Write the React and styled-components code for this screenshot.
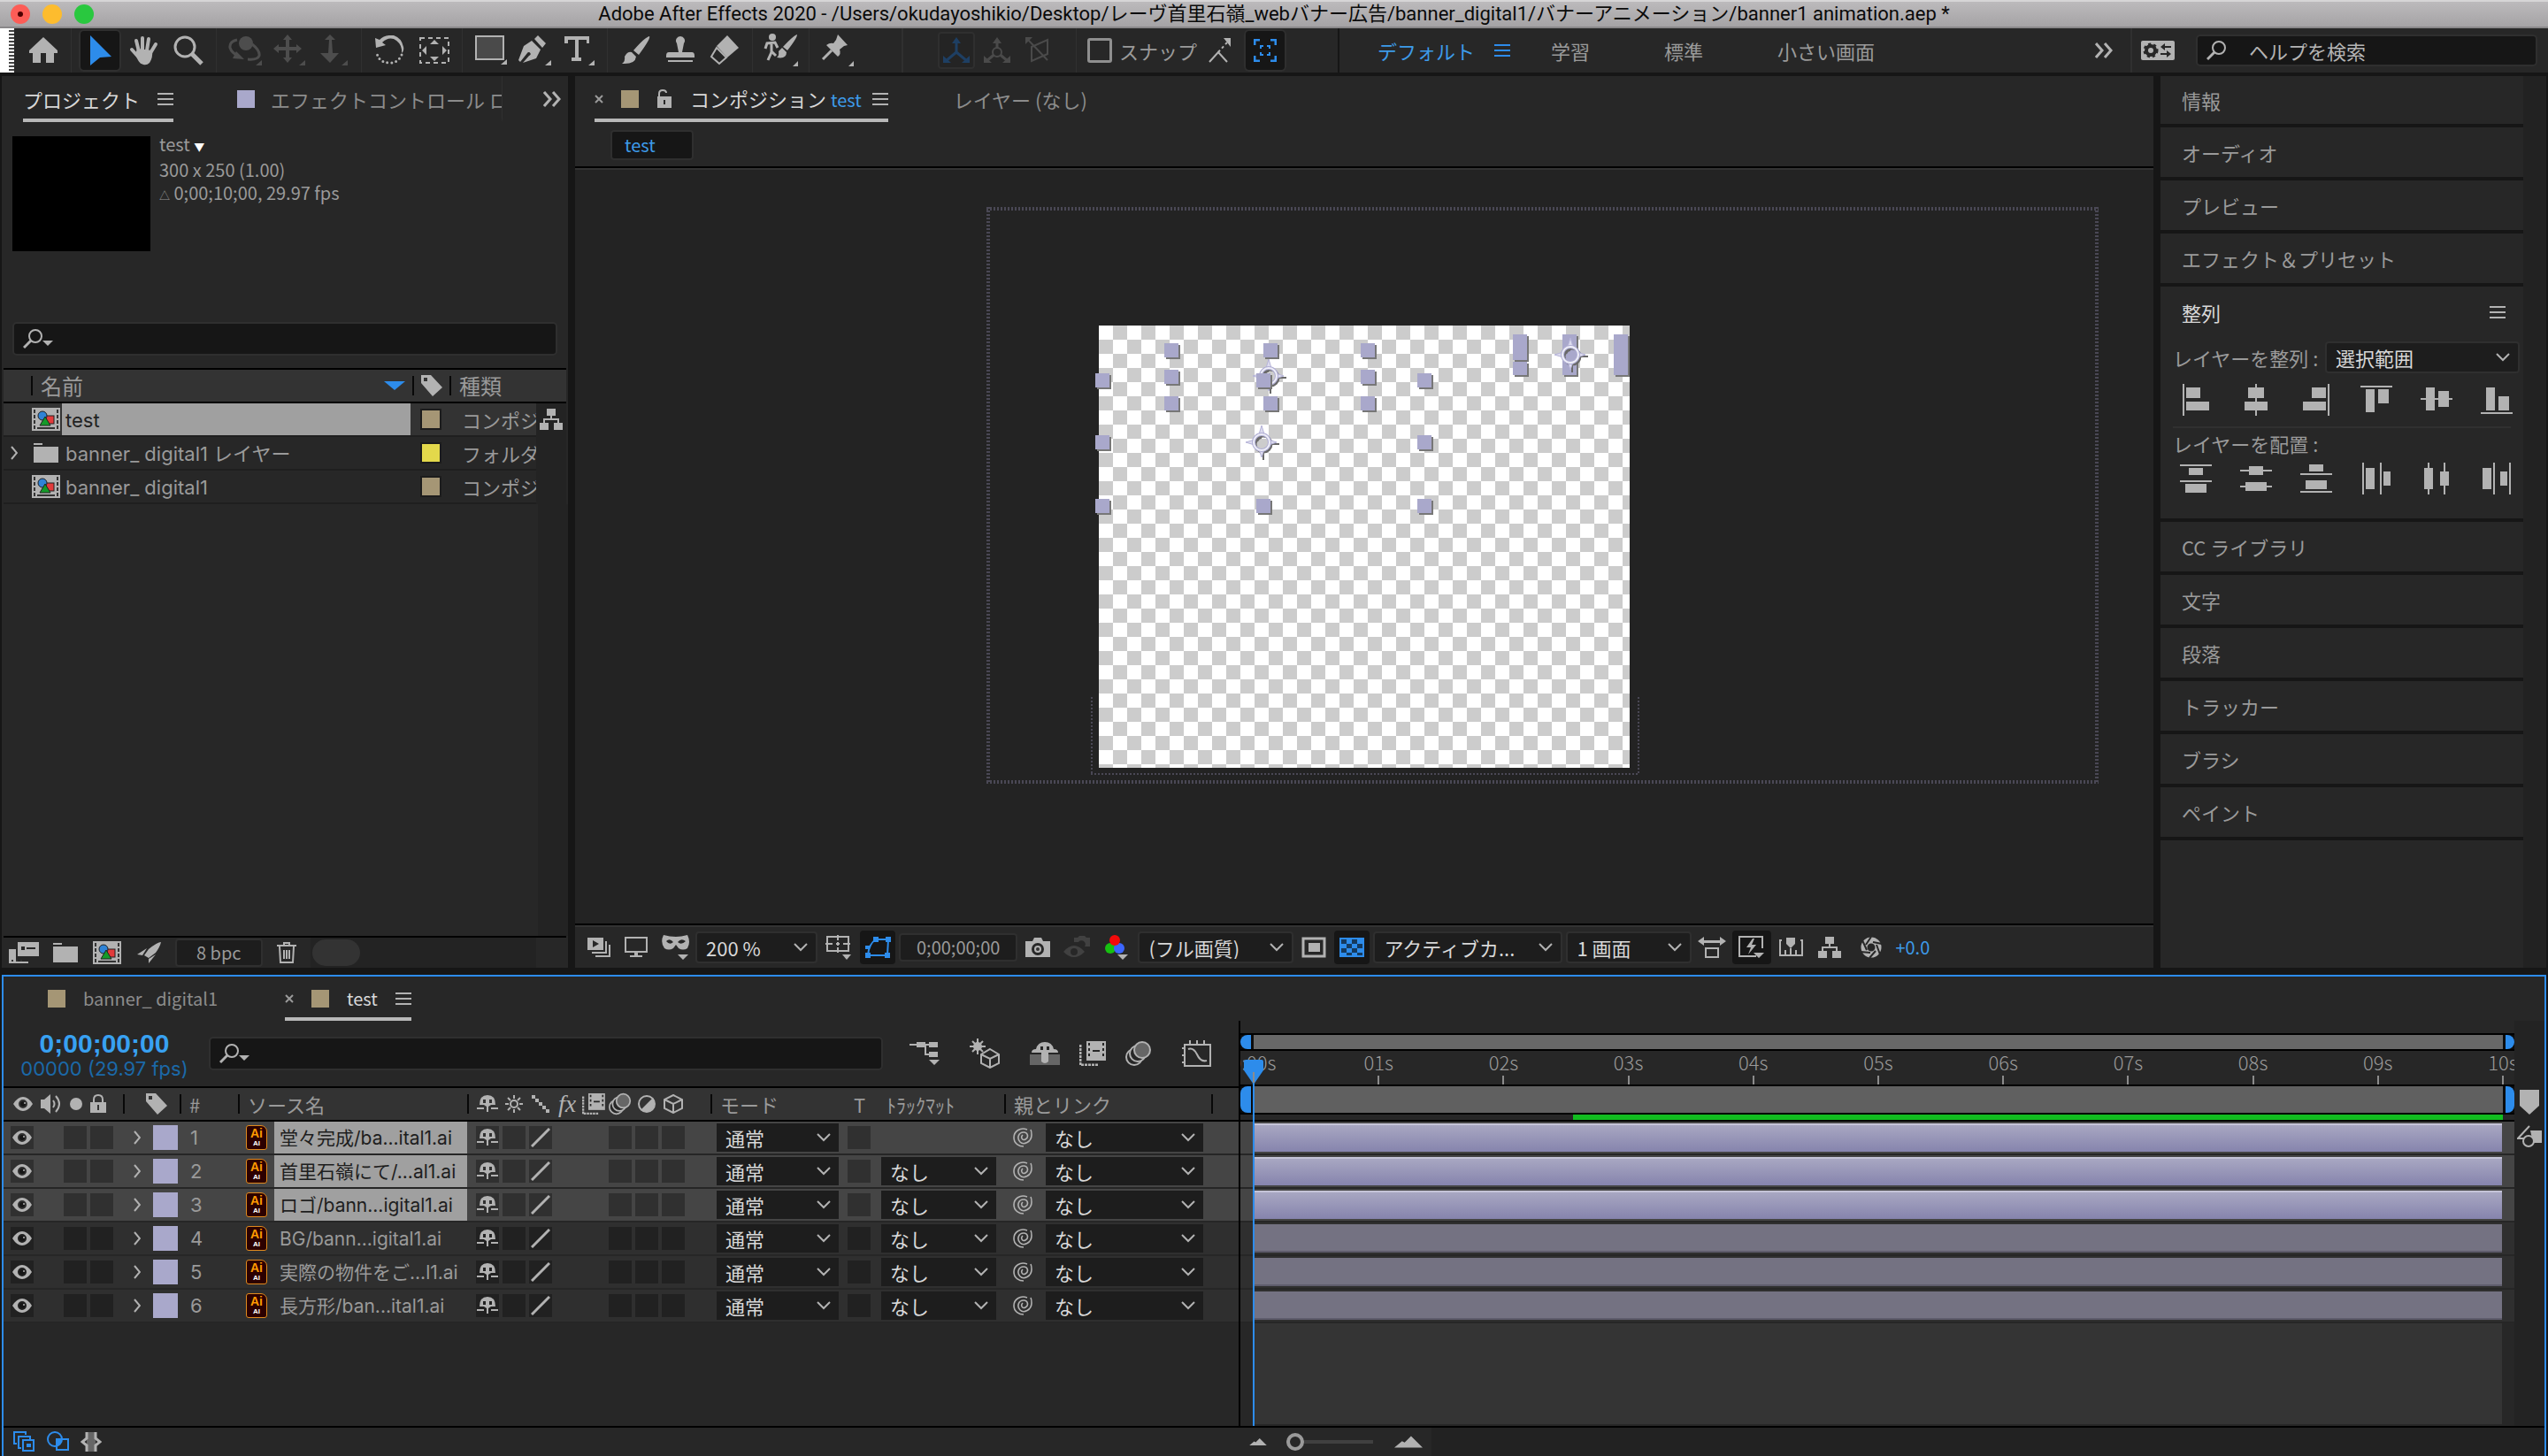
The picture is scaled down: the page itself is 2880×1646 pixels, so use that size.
import React, { Component } from 'react'
import styled, { createGlobalStyle, css } from 'styled-components'

const colorPanel = '#272727'
const colorDark = '#161616'
const colorField = '#1d1d1d'
const colorText = '#9a9a9a'
const colorBright = '#d8d8d8'
const colorIcon = '#b2b2b2'
const colorBlue = '#2d8ceb'
const colorLavender = '#a9a8cb'
const colorSand = '#a59675'

const fontUi = '"Noto Sans CJK JP", sans-serif'
const fontSystem = 'Inter, "Noto Sans CJK JP", sans-serif'
const fontTitle = 'Roboto, "Noto Sans CJK JP", sans-serif'
const fontTimecode = '"Liberation Sans", sans-serif'

const GlobalStyle = createGlobalStyle`
  * { box-sizing: border-box; }
  body {
    margin: 0;
    background: ${colorDark};
    color: ${colorText};
    font-family: ${fontUi};
    font-size: 22px;
    line-height: 26px;
  }
  button, select, input {
    font: inherit;
    color: inherit;
    margin: 0;
    padding: 0;
    border: 0;
    background: none;
    border-radius: 0;
    outline: 0;
  }
  svg { display: block; flex: none; }
`

/* ---------- icons ---------- */

const Icon = ({ w, h, color, children }) => (
  <svg
    width={w}
    height={h}
    viewBox={`0 0 ${w} ${h}`}
    fill={color || colorIcon}
    stroke='none'
    aria-hidden='true'
  >
    {children}
  </svg>
)

const Line = ({ d, s = 2, c = colorIcon, ...rest }) => (
  <path d={d} fill='none' stroke={c} strokeWidth={s} {...rest} />
)

const HomeIcon = () => (
  <Icon w={32} h={30}>
    <path d='M16 0L32 15V18H28V29H19V18H13V29H4V18H0V15Z' />
  </Icon>
)
const ArrowIcon = () => (
  <Icon w={26} h={36} color={colorBlue}>
    <path d='M2 1L26 25L13 26L2 35Z' />
  </Icon>
)
const HandIcon = () => (
  <Icon w={34} h={34}>
    <Line
      s={4}
      strokeLinecap='round'
      d='M11 18L8 6M15 17V3M20 17L22 4M24 20L30 10M11 25L3 16'
    />
    <path d='M9 15L26 17Q27 25 23 31Q20 34 16 33Q12 32 10 28L7 22Z' />
  </Icon>
)
const ZoomIcon = () => (
  <Icon w={34} h={34}>
    <circle cx='13' cy='13' r='11' fill='none' stroke={colorIcon} strokeWidth='3' />
    <Line d='M21 21L32 32' s={5} />
  </Icon>
)
const OrbitIcon = () => (
  <Icon w={38} h={36} color='#4d4d4d'>
    <circle cx='20' cy='10' r='8' />
    <Line c='#4d4d4d' s={3} d='M10 6Q1 8 2 15Q4 21 11 24M27 11Q36 18 35 24Q33 29 22 28' />
    <path d='M9 19L18 28L5 27ZM38 29V35H31Z' />
  </Icon>
)
const PanIcon = () => (
  <Icon w={38} h={36} color='#4d4d4d'>
    <Line c='#4d4d4d' s={4} d='M17 4V28M5 16H29' />
    <path d='M17 0L22 6H12ZM17 32L22 26H12ZM1 16L7 11V21ZM33 16L27 11V21ZM37 29V35H30Z' />
  </Icon>
)
const DollyIcon = () => (
  <Icon w={32} h={36} color='#4d4d4d'>
    <path d='M12 0L18 6H14L15 21H22L12 32L1 21H10L11 6H6ZM32 29V35H25Z' />
  </Icon>
)
const RotateIcon = () => (
  <Icon w={34} h={34}>
    <path d='M0 3L1 14L12 11L8 8Q14 2 21 4Q29 8 30 16V20Q33 18 32 13Q30 3 21 0Q11 -1 5 5Z' />
    <Line s={3} strokeLinecap='round' strokeDasharray='0 5' d='M30 22Q26 31 17 31Q4 31 2 20' />
  </Icon>
)
const AnchorToolIcon = () => (
  <Icon w={34} h={30}>
    <Line strokeDasharray='5 4' d='M1 1H33V29H1Z' />
    <path d='M17 3L22 8H12ZM17 27L22 22H12ZM3 15L8 10V20ZM31 15L26 10V20Z' />
  </Icon>
)
const RectIcon = () => (
  <Icon w={38} h={36}>
    <rect x='2' y='2' width='31' height='26' fill='#4a4a4a' stroke={colorIcon} strokeWidth='2' />
    <path d='M37 28V34H30Z' />
  </Icon>
)
const PenIcon = () => (
  <Icon w={38} h={36}>
    <path d='M22 1L31 10L27 15L18 5ZM15 7L25 17L20 27L5 32L12 24A2 2 0 1 0 10 21L2 31L0 29L6 13ZM37 29V35H30Z' />
  </Icon>
)
const TypeIcon = () => (
  <Icon w={36} h={36}>
    <path d='M1 2H29V10H26V6H17V26H20V30H9V26H13V6H5V10H1ZM35 29V35H28Z' />
  </Icon>
)
const BrushIcon = () => (
  <Icon w={34} h={34}>
    <path d='M32 1Q34 3 20 22L14 17Q27 2 32 1ZM12 19L17 24Q16 33 1 32Q5 29 4 24Q7 18 12 19Z' />
  </Icon>
)
const StampIcon = () => (
  <Icon w={34} h={32}>
    <path d='M17 0A5 5 0 0 1 21 8L19 18H30Q33 18 33 22V24H1V22Q1 18 4 18H15L13 8A5 5 0 0 1 17 0ZM3 27H31V29H3Z' />
  </Icon>
)
const EraserIcon = () => (
  <Icon w={34} h={34}>
    <path d='M20 0L33 14L20 25L8 12Z' />
    <Line d='M8 14L2 24L11 32L19 25Z' />
  </Icon>
)
const RotoIcon = () => (
  <Icon w={40} h={38}>
    <circle cx='10' cy='4' r='4' />
    <Line s={3} d='M2 17L4 11L13 10L16 16M9 11V21L5 30M9 20L14 25' />
    <path d='M38 1Q38 5 27 19L22 15Q34 2 38 1ZM21 16L26 21Q26 29 15 27Q18 25 17 20ZM39 31V37H33Z' />
  </Icon>
)
const PinIcon = () => (
  <Icon w={38} h={38}>
    <path d='M19 1L30 13L26 14L21 18Q23 23 19 26L6 13Q10 10 14 11L17 7Z' />
    <Line d='M12 19L2 29' s={3} />
    <path d='M37 31V37H31Z' />
  </Icon>
)
const AxisIcon = ({ color, hub }) => (
  <Icon w={30} h={30} color={color}>
    <Line c={color} s={3} d='M15 4V17M15 17L3 27M15 17L27 27' />
    <path d='M15 0L20 7H10ZM0 21V29H9ZM30 21V29H21Z' />
    {hub && <circle cx='15' cy='17' r='5' fill={colorPanel} stroke={color} strokeWidth='2' />}
  </Icon>
)
const ViewAxisIcon = () => (
  <Icon w={28} h={30} color='#4a4a4a'>
    <Line c='#4a4a4a' d='M3 3L25 26M7 11L25 3V19L7 27Z' />
    <path d='M0 0H8L0 8Z' />
  </Icon>
)
const SnapEdgeIcon = () => (
  <Icon w={28} h={28}>
    <path d='M18 0H26V10Z' />
    <Line d='M2 27L12 16L22 27' />
    <Line d='M12 16L22 5' strokeDasharray='3 3' />
  </Icon>
)
const SnapBoxIcon = () => (
  <Icon w={26} h={26}>
    <Line c={colorBlue} s={3} d='M1 7V1H7M19 1H25V7M25 19V25H19M7 25H1V19' />
    <Line c={colorBlue} d='M8 11V8H11M15 8H18V11M18 15V18H15M11 18H8V15' />
  </Icon>
)
const MenuIcon = ({ color }) => (
  <Icon w={18} h={16} color={color}>
    <path d='M0 1H18V3H0ZM0 7H18V9H0ZM0 13H18V15H0Z' />
  </Icon>
)
const MoreIcon = () => (
  <Icon w={20} h={18}>
    <Line s={3} d='M1 1L8 9L1 17M11 1L18 9L11 17' />
  </Icon>
)
const GearIcon = () => (
  <Icon w={38} h={22}>
    <rect width='38' height='22' rx='2' />
    <circle cx='11' cy='11' r='5' fill='none' stroke={colorPanel} strokeWidth='4' />
    <circle cx='11' cy='11' r='7' fill='none' stroke={colorPanel} strokeWidth='3' strokeDasharray='3 3' />
    <path fill={colorPanel} d='M22 7L27 3V6H34V8H27V11ZM34 15L29 11V14H22V16H29V19Z' />
  </Icon>
)
const SearchIcon = ({ caret }) => (
  <Icon w={34} h={24}>
    <circle cx='14' cy='9' r='7' fill='none' stroke={colorIcon} strokeWidth='2' />
    <Line d='M9 14L1 22' s={3} />
    {caret && <path d='M22 14H34L28 20Z' />}
  </Icon>
)
const ChevronDown = () => (
  <Icon w={16} h={10}>
    <Line d='M1 1L8 8L15 1' />
  </Icon>
)
const ChevronRight = () => (
  <Icon w={8} h={16}>
    <Line d='M1 1L7 8L1 15' />
  </Icon>
)
const CloseIcon = () => (
  <Icon w={10} h={10}>
    <Line c={colorText} d='M1 1L9 9M9 1L1 9' />
  </Icon>
)
const UnlockIcon = () => (
  <Icon w={18} h={22}>
    <Line d='M3 9V5Q3 1 7 1Q11 1 11 4' />
    <path d='M1 8H17V21H1ZM8 12V17H10V12Z' fillRule='evenodd' />
  </Icon>
)
const LockIcon = () => (
  <Icon w={18} h={22}>
    <Line d='M4 10V6Q4 1 9 1Q14 1 14 6V10' />
    <path d='M0 9H18V21H0ZM8 12V18H10V12Z' fillRule='evenodd' />
  </Icon>
)
const CompIcon = ({ size = 32 }) => (
  <svg width={size} height={26} viewBox='0 0 32 26' aria-hidden='true'>
    <rect width='32' height='26' fill={colorIcon} />
    <path d='M3 2V26M29 2V26' stroke='#333' strokeWidth='2' strokeDasharray='4 2' />
    <path d='M6 23H26' stroke='#333' strokeWidth='2' />
    <rect x='15' y='9' width='10' height='9' fill='#e23b3b' stroke='#222' />
    <circle cx='12' cy='9' r='5' fill='#2f83d6' stroke='#222' />
    <path d='M15 10L21 20H9Z' fill='#149a29' stroke='#222' />
  </svg>
)
const FolderIcon = () => (
  <Icon w={28} h={22}>
    <path d='M0 0H10V2H0ZM0 4H28V22H0Z' />
  </Icon>
)
const TagIcon = () => (
  <Icon w={24} h={24}>
    <path fillRule='evenodd' d='M0 0H11L24 14L13 24L0 9ZM3 3V7H7V3Z' />
  </Icon>
)
const FlowIcon = () => (
  <Icon w={26} h={24}>
    <path d='M8 0H18V8H8ZM0 16H10V24H0ZM16 16H26V24H16Z' />
    <Line d='M13 8V12M5 16V12H21V16' />
  </Icon>
)
const InterpretIcon = () => (
  <Icon w={34} h={24}>
    <path d='M0 8H8V22H22V24H0ZM10 0H34V16H10ZM14 5V9H18V5ZM20 6H30V8H20Z' fillRule='evenodd' />
    <path fill='#333' d='M3 20H5V22H3ZM8 20H10V22H8ZM13 20H15V22H13Z' />
  </Icon>
)
const RocketIcon = () => (
  <Icon w={28} h={24}>
    <path d='M28 0Q24 0 14 8L9 15L14 18L22 12Q27 5 28 0ZM12 7L1 14L7 15ZM22 14L14 24V19Z' />
  </Icon>
)
const TrashIcon = () => (
  <Icon w={22} h={24}>
    <Line d='M8 3V1H14V3M0 4H22M3 5L4 23H18L19 5M8 9V19M11 9V19M14 9V19' />
  </Icon>
)
const StackPlayIcon = () => (
  <Icon w={26} h={22}>
    <path fillRule='evenodd' d='M0 0H18V14H0ZM6 3V11L13 7Z' />
    <Line d='M21 4V17H5M25 8V21H9' />
  </Icon>
)
const MonitorIcon = () => (
  <Icon w={26} h={24}>
    <Line d='M1 1H25V17H1Z' />
    <path d='M11 18H15V21H20V23H6V21H11Z' />
  </Icon>
)
const MaskIcon = () => (
  <Icon w={32} h={28}>
    <path
      fillRule='evenodd'
      d='M2 0Q9 2 16 2Q22 2 29 0Q33 8 29 15Q24 18 19 15L16 11L13 15Q8 18 3 15Q-2 8 2 0ZM5 7Q9 3 13 8Q9 12 5 7ZM18 8Q22 3 27 7Q22 12 18 8ZM18 22H30L24 28Z'
    />
  </Icon>
)
const TargetIcon = () => (
  <Icon w={30} h={28}>
    <Line d='M2 2H26V18H2Z' />
    <Line d='M14 0V6M14 14V20M0 10H8M20 10H28M14 8V12M12 10H16' />
    <path d='M19 22H29L24 28Z' />
  </Icon>
)
const MaskPathIcon = () => (
  <Icon w={30} h={24} color={colorBlue}>
    <Line c={colorBlue} d='M4 21H26L27 3H13Q5 8 4 21' />
    <path d='M1 18H7V24H1ZM23 18H29V24H23ZM24 0H30V6H24ZM10 0H16V6H10ZM1 10H6V14H1Z' />
  </Icon>
)
const CameraIcon = () => (
  <Icon w={28} h={22}>
    <path fillRule='evenodd' d='M0 4H8L10 0H18L20 4H28V22H0ZM14 6A7 7 0 1 0 14 20A7 7 0 1 0 14 6Z' />
    <circle cx='14' cy='13' r='4' />
    <circle cx='14' cy='13' r='2' fill='#333' />
  </Icon>
)
const GhostCameraIcon = () => (
  <Icon w={30} h={26} color='#414141'>
    <path fillRule='evenodd' d='M12 2H16L18 0H24L26 2H30V12H24A4 4 0 1 0 17 7H12ZM0 18Q12 4 24 18Q12 30 0 18ZM12 14A4 4 0 1 0 12 22A4 4 0 1 0 12 14Z' />
  </Icon>
)
const RgbIcon = () => (
  <Icon w={26} h={28}>
    <circle cx='6' cy='15' r='6' fill='#17c011' />
    <circle cx='16' cy='15' r='6' fill='#3c66ff' />
    <circle cx='11' cy='6' r='6' fill='#f30a0a' />
    <path d='M14 22H26L20 28Z' />
  </Icon>
)
const RoiIcon = () => (
  <Icon w={28} h={24}>
    <Line s={3} d='M2 2H26V22H2Z' />
    <rect x='8' y='7' width='13' height='10' />
  </Icon>
)
const GridIcon = () => (
  <Icon w={28} h={22}>
    <rect x='1' y='1' width='26' height='20' fill='#153a5e' stroke={colorBlue} strokeWidth='2' />
    <path fill={colorBlue} d='M8 2H14V7H8ZM20 2H26V7H20ZM2 7H8V12H2ZM14 7H20V12H14ZM8 12H14V17H8ZM20 12H26V17H20ZM2 17H8V20H2ZM14 17H20V20H14Z' />
  </Icon>
)
const AspectIcon = () => (
  <Icon w={32} h={24}>
    <path d='M0 5L7 0V4H25V0L32 5L25 10V7H7V10Z' />
    <Line d='M9 13H23V23H9Z' />
  </Icon>
)
const FastIcon = () => (
  <Icon w={30} h={26}>
    <Line d='M20 23H1V1H27V14' />
    <path d='M16 3L9 13H14L11 21L20 10H15L18 3ZM17 19H29L23 25Z' />
  </Icon>
)
const TimelineIcon = () => (
  <Icon w={28} h={22}>
    <Line d='M3 3H1V20H26V3H24M7 14V19M13 12V19M19 14V19' />
    <path d='M8 0H18V7L13 12L8 7Z' />
  </Icon>
)
const ShutterIcon = () => (
  <Icon w={26} h={24}>
    <circle cx='13' cy='12' r='8' fill='none' stroke={colorIcon} strokeWidth='7' />
    <Line c={colorPanel} d='M13 0L7 9M25 8L15 6M23 20L19 9M11 24L18 16M1 17L12 18M3 4L8 15' />
  </Icon>
)
const MiniFlowIcon = () => (
  <Icon w={34} h={28}>
    <path d='M8 1H18V7H8ZM22 1H32V7H22ZM22 12H32V18H22ZM22 21H34L28 27Z' />
    <Line d='M0 4H24M18 4V15H23' />
  </Icon>
)
const DraftIcon = () => (
  <Icon w={34} h={34}>
    <Line d='M9 0V18M0 9H18M3 3L15 15M15 3L3 15' />
    <circle cx='9' cy='9' r='5' />
    <Line d='M23 12L33 18V28L23 33L13 28V18ZM13 18L23 23L33 18M23 23V33' />
  </Icon>
)
const ShyHideIcon = () => (
  <Icon w={34} h={26}>
    <rect y='14' width='34' height='12' fill='#666' />
    <path fillRule='evenodd' d='M2 12Q2 8 7 8Q9 0 17 0Q25 0 27 8Q32 8 32 12H21V22Q17 26 13 22V12ZM12 5V9H15V5ZM19 5V9H22V5Z' />
  </Icon>
)
const FilmIcon = ({ w = 30, h = 28 }) => (
  <svg width={w} height={h} viewBox='0 0 30 28' fill={colorIcon} aria-hidden='true'>
    <path d='M8 0H30V22H8Z' />
    <path fill={colorPanel} d='M10 2H12V5H10ZM10 8H12V11H10ZM10 14H12V17H10ZM26 2H28V5H26ZM26 8H28V11H26ZM26 14H28V17H26ZM15 10H23V12H15Z' />
    <path d='M1 4V27H22' fill='none' stroke={colorIcon} strokeWidth='3' strokeDasharray='3 1' />
  </svg>
)
const BlurIcon = ({ w = 30, h = 28 }) => (
  <svg width={w} height={h} viewBox='0 0 30 28' aria-hidden='true'>
    <g fill={colorPanel} stroke={colorIcon} strokeWidth='2'>
      <circle cx='10' cy='18' r='9' />
      <circle cx='14' cy='14' r='9' />
      <circle cx='19' cy='10' r='9' fill='#666' />
    </g>
  </svg>
)
const GraphIcon = () => (
  <Icon w={34} h={30}>
    <Line d='M3 5H32V29H3ZM9 0V5M17 0V5M25 0V5M0 9H3M0 17H3M0 25H3' />
    <Line d='M7 10Q13 8 17 16Q21 25 28 23' />
  </Icon>
)
const EyeIcon = () => (
  <Icon w={22} h={16}>
    <path fillRule='evenodd' d='M0 8Q5 0 11 0Q17 0 22 8Q17 16 11 16Q5 16 0 8ZM11 3A5 5 0 1 0 11 13A5 5 0 1 0 11 3Z' />
    <circle cx='11' cy='8' r='3' fill='#161616' />
    <circle cx='13' cy='7' r='1' />
  </Icon>
)
const SpeakerIcon = () => (
  <Icon w={24} h={22}>
    <path d='M0 6H4L11 0V22L4 16H0Z' />
    <Line d='M14 7Q17 11 14 15M17 2Q25 11 17 20' />
  </Icon>
)
const DotIcon = () => (
  <Icon w={14} h={14}>
    <circle cx='7' cy='7' r='7' />
  </Icon>
)
const ShyIcon = () => (
  <Icon w={24} h={20}>
    <path fillRule='evenodd' d='M3 11Q3 0 12 0Q21 0 21 11H16L13 13V19H11V13L8 11ZM7 5V9H10V5ZM14 5V9H17V5Z' />
    <Line d='M0 15H8M16 15H24' />
  </Icon>
)
const SunIcon = () => (
  <Icon w={20} h={20}>
    <circle cx='10' cy='10' r='4' fill='none' stroke={colorIcon} strokeWidth='2' />
    <Line d='M10 0V4M10 16V20M0 10H4M16 10H20M3 3L6 6M14 14L17 17M17 3L14 6M6 14L3 17' />
  </Icon>
)
const JagIcon = () => (
  <Icon w={20} h={20}>
    <path d='M0 0H4V4H0ZM4 4H8V8H4ZM8 8H12V12H8ZM12 12H16V16H12ZM16 16H20V20H16Z' />
  </Icon>
)
const HalfIcon = () => (
  <Icon w={22} h={22}>
    <circle cx='11' cy='11' r='9' fill='none' stroke={colorIcon} strokeWidth='2' />
    <path d='M18 4A10 10 0 0 1 4 18Z' />
  </Icon>
)
const CubeIcon = () => (
  <Icon w={22} h={22}>
    <Line d='M11 1L21 6V16L11 21L1 16V6ZM1 6L11 11L21 6M11 11V21' />
  </Icon>
)
const SlashIcon = () => (
  <Icon w={22} h={22}>
    <Line s={3} d='M1 21L21 1' />
  </Icon>
)
const WhipIcon = () => (
  <Icon w={26} h={22}>
    <Line
      s={1.6}
      d='M12 8C9 11 12 15 15 13C19 11 18 5 13 5C7 5 5 12 9 16C13 20 22 16 22 8C22 5 22 4 21 2M17 2C9 -1 2 4 2 11C2 18 8 21 13 21'
    />
  </Icon>
)
const ToggleLayersIcon = () => (
  <Icon w={26} h={24}>
    <Line c={colorBlue} d='M4 14H1V1H14V4M9 19H6V6H19V9M11 10H23V22H11Z' />
    <rect x='15' y='14' width='5' height='4' fill={colorBlue} />
  </Icon>
)
const ToggleModesIcon = () => (
  <Icon w={26} h={24}>
    <circle cx='9' cy='9' r='8' fill='none' stroke={colorBlue} strokeWidth='2' />
    <Line c={colorBlue} d='M11 9H24V21H11Z' />
    <path fill={colorBlue} d='M11 9H17Q17 15 11 17Z' />
  </Icon>
)
const BracesIcon = () => (
  <Icon w={24} h={24}>
    <rect x='7' y='1' width='10' height='22' fill='#666' />
    <Line s={3} d='M7 1V8L2 12L7 16V23M17 1V8L22 12L17 16V23' />
  </Icon>
)
const MarkerIcon = () => (
  <Icon w={22} h={28}>
    <path d='M0 0H22V18L11 28L0 18Z' />
  </Icon>
)
const CompButtonIcon = () => (
  <Icon w={28} h={26}>
    <path d='M15 6H28V20H18Z' />
    <Line d='M14 1L1 15H10' />
    <circle cx='13' cy='18' r='6' fill={colorPanel} stroke={colorIcon} strokeWidth='2' />
  </Icon>
)
const HillsIcon = ({ w, h }) => (
  <svg width={w} height={h} viewBox='0 0 22 9' fill={colorIcon} aria-hidden='true'>
    <path d='M0 9L6 4L8 5L13 0L22 9Z' />
  </svg>
)
const AnchorMark = () => (
  <svg width='40' height='40' viewBox='0 0 40 40' aria-hidden='true'>
    <g fill='none' stroke='#6a6a6a' strokeWidth='2'>
      <circle cx='22' cy='22' r='9' strokeWidth='3' />
      <path d='M22 30V40M30 22H40' />
      <path d='M15 19Q17 15 20 15' />
    </g>
    <path
      d='M20 1L23 11H17ZM20 37L17 28H23ZM2 20L12 17V23ZM37 20L28 23V17Z'
      fill='#dcdbee'
      stroke='#b6b4d8'
      strokeWidth='1'
    />
    <circle cx='20' cy='20' r='9' fill='none' stroke='#b0aed4' strokeWidth='4' />
    <circle cx='20' cy='20' r='9' fill='none' stroke='#efeff8' strokeWidth='2' />
  </svg>
)

/* six align + six distribute drawings, kept as rect lists on a 36px box */
const alignShapes = [
  ['左揃え', [[3, 0, 2, 36], [7, 4, 16, 12], [7, 20, 26, 10]]],
  ['水平方向中央', [[17, 0, 2, 36], [9, 4, 18, 12], [5, 20, 26, 10]]],
  ['右揃え', [[31, 0, 2, 36], [13, 4, 16, 12], [3, 20, 26, 10]]],
  ['上揃え', [[0, 2, 36, 2], [6, 6, 10, 26], [20, 6, 12, 16]]],
  ['垂直方向中央', [[0, 16, 36, 2], [6, 4, 10, 26], [20, 8, 12, 18]]],
  ['下揃え', [[0, 32, 36, 2], [6, 4, 10, 26], [20, 14, 12, 16]]]
]
const distributeShapes = [
  ['上端', [[0, 2, 36, 2], [10, 6, 16, 8], [0, 20, 36, 2], [6, 24, 24, 10]]],
  ['垂直中央', [[0, 8, 36, 2], [10, 4, 16, 10], [0, 26, 36, 2], [6, 22, 24, 10]]],
  ['下端', [[10, 2, 16, 8], [0, 12, 36, 2], [6, 20, 24, 10], [0, 32, 36, 2]]],
  ['左端', [[2, 0, 2, 36], [6, 6, 10, 24], [22, 0, 2, 36], [26, 10, 8, 16]]],
  ['水平中央', [[8, 0, 2, 36], [4, 6, 10, 24], [26, 0, 2, 36], [22, 10, 10, 16]]],
  ['右端', [[2, 6, 10, 24], [14, 0, 2, 36], [22, 10, 8, 16], [32, 0, 2, 36]]]
]

/* ---------- window chrome ---------- */

const Window = styled.div`
  display: flex;
  flex-direction: column;
  min-height: 100vh;
`

const TitleBar = styled.header`
  position: relative;
  display: flex;
  align-items: center;
  justify-content: center;
  height: 32px;
  background: linear-gradient(#bcbabc, #a5a3a5);
  border-top: 2px solid #d6d5d6;
  border-bottom: 2px solid #8a888a;
  > h1 {
    margin: 0;
    font-family: ${fontTitle};
    font-weight: normal;
    font-size: 22px;
    line-height: 28px;
    white-space: nowrap;
    color: #0a0a0a;
  }
`

const Lights = styled.div`
  position: absolute;
  left: 12px;
  display: flex;
  gap: 14px;
`

const Light = styled.button`
  display: grid;
  place-items: center;
  width: 22px;
  height: 22px;
  border-radius: 50%;
  background: ${p => p.$color};
  &::after {
    content: '';
    width: 6px;
    height: 6px;
    border-radius: 50%;
    background: ${p => (p.$edited ? '#4d0000' : 'transparent')};
  }
`

const Toolbar = styled.nav`
  display: flex;
  height: 54px;
  background: ${colorPanel};
  border-bottom: 4px solid ${colorDark};
`

const Grip = styled.div`
  width: 16px;
  background: repeating-linear-gradient(#fff 0 2px, #444 2px 4px) right / 6px 100% no-repeat #fff;
`

const Tools = styled.div`
  display: flex;
  align-items: center;
  padding: 0 7px;
  min-width: ${p => (p.$wide ? '106px' : '0')};
  border-left: 1px solid ${p => (p.$first ? 'transparent' : '#303030')};
  margin-right: -1px;
`

const Tool = styled.button`
  display: grid;
  place-items: center;
  width: 50px;
  height: 44px;
`

const ToolActive = styled(Tool)`
  width: 44px;
  margin: 0 3px;
  background: ${colorDark};
  border-radius: 4px;
  box-shadow: 0 0 0 2px #2f2f2f;
`

const AxisTools = styled.div`
  display: flex;
  align-items: center;
  gap: 4px;
  padding: 0 22px 0 39px;
  border-left: 2px solid #303030;
`

const AxisTool = styled.button`
  display: grid;
  place-items: center;
  width: 42px;
  height: 42px;
  border-radius: 4px;
  ${p => p.$on && css`background: #242424; box-shadow: inset 0 0 0 2px #2f2f2f;`}
`

const Snapping = styled.div`
  display: flex;
  align-items: center;
  gap: 12px;
  padding-left: 12px;
  width: 296px;
  border-left: 1px solid #303030;
  > label {
    display: flex;
    align-items: center;
    gap: 8px;
    white-space: nowrap;
  }
  input {
    appearance: none;
    width: 28px;
    height: 28px;
    border: 3px solid #8f8f8f;
    border-radius: 3px;
  }
`

const Workspaces = styled.div`
  flex: 1;
  display: flex;
  align-items: center;
  gap: 84px;
  padding: 0 20px 0 43px;
  border-left: 2px solid ${colorDark};
  white-space: nowrap;
`

const WorkspaceTab = styled.button`
  color: ${p => (p.$on ? '#3d9be9' : colorText)};
`

const WorkspaceActive = styled.div`
  display: flex;
  align-items: center;
  gap: 22px;
  margin-right: -38px;
`

const Push = styled.button`
  margin-left: auto;
`

const HelpArea = styled.div`
  display: flex;
  align-items: center;
  gap: 24px;
  width: 472px;
  padding: 0 12px 0 10px;
  border-left: 2px solid #303030;
`

const SearchBox = styled.label`
  flex: 1;
  display: flex;
  align-items: center;
  gap: 14px;
  height: ${p => p.$h || 36}px;
  padding: 0 10px;
  background: ${colorDark};
  border: 2px solid #2f2f2f;
  border-radius: 5px;
  > input {
    flex: 1;
    min-width: 0;
    &::placeholder { color: #b4b4b4; opacity: 1; }
  }
`

/* ---------- panels ---------- */

const Workarea = styled.main`
  flex: 1;
  display: grid;
  grid-template-columns: 640px 1fr 436px;
  gap: 8px;
  padding: 0 2px 8px;
`

const Panel = styled.section`
  display: flex;
  flex-direction: column;
  min-width: 0;
  background: ${colorPanel};
`

const Tabs = styled.div`
  display: flex;
  height: 52px;
  padding-left: ${p => p.$pad}px;
`

const Tab = styled.div`
  display: flex;
  align-items: center;
  gap: 20px;
  padding: 4px ${p => p.$px || 0}px 0;
  border-bottom: 4px solid ${p => (p.$on ? '#b8b8b8' : 'transparent')};
  color: ${p => (p.$on ? colorBright : '#8c8c8c')};
  white-space: nowrap;
  overflow: hidden;
`

const EffectTab = styled(Tab)`
  gap: 18px;
  width: 300px;
  margin-left: 72px;
  border-right: 1px solid #303030;
`

const TabTitle = styled.span`
  margin-right: -8px;
`

const PanelMore = styled.button`
  margin: 0 8px 0 auto;
  height: 52px;
`

const Swatch = styled.span`
  flex: none;
  width: 20px;
  height: 20px;
  background: ${p => p.$color};
`

const Blue = styled.span`
  color: #3d9be9;
  font-size: 20px;
`

const Preview = styled.div`
  display: flex;
  gap: 10px;
  height: 226px;
  padding: 12px 12px 0;
  font-size: 20px;
`

const Thumb = styled.div`
  width: 156px;
  height: 130px;
  margin-top: 4px;
  background: #000;
`

const Info = styled.div`
  white-space: nowrap;
  b {
    color: #fff;
    font-weight: normal;
    font-size: 12px;
  }
  small { font-size: 12px; }
`

const SearchRow = styled.div`
  display: flex;
  padding: 0 12px;
`

const ProjectTable = styled.table`
  table-layout: fixed;
  width: 636px;
  margin: 14px 2px 0;
  border-spacing: 0;
  th, td {
    padding: 0;
    text-align: left;
    font-weight: normal;
    white-space: nowrap;
    overflow: hidden;
  }
  th {
    height: 40px;
    font-size: 24px;
    background: #333;
    border-top: 2px solid #000;
    border-bottom: 2px solid #000;
  }
  td {
    height: 38px;
    border-bottom: 2px solid #1f1f1f;
  }
  td:last-child {
    background: #232323;
    border-color: #232323;
  }
`

const HeadCell = styled.div`
  display: flex;
  align-items: center;
  justify-content: ${p => (p.$between ? 'space-between' : 'flex-start')};
  gap: ${p => p.$gap || 0}px;
  height: 22px;
  padding: 0 8px 0 ${p => (p.$pad === undefined ? 9 : p.$pad)}px;
  border-left: 2px solid ${p => (p.$bare ? 'transparent' : '#080808')};
`

const ProjectRow = styled.tr`
  background: ${p => (p.$on ? '#333' : 'transparent')};
`

const ItemName = styled.div`
  display: flex;
  align-items: center;
  gap: 2px;
  padding: 0 2px 0 1px;
  font-family: ${fontSystem};
  > svg { width: 32px; }
  > span {
    flex: 1;
    height: 36px;
    padding: 6px 4px 0;
    ${p => p.$on && css`background: #a0a0a0; color: #222;`}
  }
`

const LabelSwatch = styled(Swatch)`
  display: block;
  margin-left: 11px;
  box-shadow: 0 0 0 2px #1c1c1c;
`

const Center = styled.div`
  display: flex;
  justify-content: center;
`

const Filler = styled.div`
  flex: 1;
  margin: 0 0 0 2px;
  border-right: 34px solid #232323;
`

const PanelFoot = styled.footer`
  display: flex;
  align-items: center;
  height: 36px;
  margin: 0 2px;
  padding-left: 6px;
  gap: 16px;
  border-top: 2px solid #000;
`

const FieldButton = styled.button`
  height: 32px;
  padding: 0 ${p => p.$px || 22}px;
  background: ${colorField};
  border: 2px solid #2f2f2f;
  border-radius: 4px;
  font-size: 20px;
  white-space: nowrap;
`

const FootScroll = styled.div`
  flex: 1;
  margin-right: 34px;
  height: 34px;
  background: #232323;
  &::before {
    content: '';
    display: block;
    width: 54px;
    height: 30px;
    margin: 2px;
    border-radius: 15px;
    background: #333;
  }
`

/* ---------- composition ---------- */

const Crumbs = styled.div`
  height: 54px;
  padding: 9px 40px 0;
  border-bottom: 2px solid #333;
  box-shadow: inset 0 -2px 0 #000;
  > button {
    display: block;
    width: 94px;
    height: 34px;
    padding-left: 14px;
    text-align: left;
    font-size: 20px;
    color: #3d9be9;
    background: ${colorDark};
    border: 2px solid #2f2f2f;
    border-radius: 4px;
  }
`

const Viewer = styled.div`
  flex: 1;
  display: grid;
  place-items: center;
  isolation: isolate;
  background: #232323;
`

const Board = styled.div`
  position: relative;
  width: 600px;
  height: 500px;
  background: repeating-conic-gradient(#ccc 0 25%, #fff 0 50%) 0 0 / 32px 32px;
`

const Handle = styled.i`
  position: absolute;
  width: 16px;
  height: ${p => p.$h || 16}px;
  background: ${colorLavender};
  box-shadow: 2px 2px 0 #777;
`

const Mark = styled.div`
  position: absolute;
`

const Bounds = styled.div`
  position: absolute;
  --t: ${p => p.$t}px;
  background:
    repeating-linear-gradient(90deg, #4a4855 0 2px, transparent 2px 4px) 0 ${p => (p.$open ? '-10px' : '0')} / 100% var(--t) no-repeat,
    repeating-linear-gradient(90deg, #4a4855 0 2px, transparent 2px 4px) 0 100% / 100% var(--t) no-repeat,
    repeating-linear-gradient(#4a4855 0 2px, transparent 2px 4px) 0 0 / var(--t) 100% no-repeat,
    repeating-linear-gradient(#4a4855 0 2px, transparent 2px 4px) 100% 0 / var(--t) 100% no-repeat;
`

const OuterBounds = styled(Bounds)`
  left: -127px;
  top: -134px;
  width: 1257px;
  height: 652px;
`

const InnerBounds = styled(Bounds)`
  left: -9px;
  top: 420px;
  width: 620px;
  height: 88px;
  z-index: -1;
`

const ViewerBar = styled.footer`
  display: flex;
  align-items: center;
  gap: 12px;
  height: 50px;
  padding: 2px 0 0 12px;
  border-top: 2px solid #000;
  box-shadow: inset 0 2px 0 #333;
`

const BarIcon = styled.button`
  display: grid;
  place-items: center;
  width: ${p => p.$w || 30}px;
  height: 38px;
  ${p => p.$on && css`
    background: ${colorDark};
    border-radius: 4px;
  `}
`

const BarGroup = styled.div`
  display: flex;
  align-items: center;
  gap: 4px;
`

const Exposure = styled.button`
  color: #3d9be9;
  font-size: 20px;
`

const SelectWrap = styled.span`
  display: grid;
  align-items: center;
  width: ${p => p.$w}px;
  height: ${p => p.$h || 36}px;
  background: ${colorField};
  color: ${colorBright};
  ${p => !p.$flat && css`
    border: 2px solid #2f2f2f;
    border-radius: 4px;
  `}
  > * { grid-area: 1 / 1; }
  > select {
    appearance: none;
    width: 100%;
    height: 100%;
    padding: 0 30px 0 10px;
  }
  > svg {
    justify-self: end;
    margin-right: 9px;
    pointer-events: none;
  }
`

const Select = ({ label, value, ...rest }) => (
  <SelectWrap {...rest}>
    <select aria-label={label} defaultValue={value}>
      <option>{value}</option>
    </select>
    <ChevronDown />
  </SelectWrap>
)

/* ---------- right column ---------- */

const SideList = styled.div`
  flex: 1;
  border-right: 26px solid #222;
`

const SideItem = styled.button`
  display: block;
  width: 100%;
  height: 60px;
  padding: 0 24px;
  text-align: left;
  border-bottom: 4px solid ${colorDark};
  white-space: nowrap;
  &:first-child { height: 58px; }
`

const AlignPanel = styled.div`
  height: 266px;
  padding: 14px 4px 0 14px;
  border-bottom: 4px solid ${colorDark};
  > h2 {
    display: flex;
    align-items: center;
    justify-content: space-between;
    margin: 0;
    padding: 0 16px 0 10px;
    height: 30px;
    font-size: 22px;
    font-weight: normal;
    color: ${colorBright};
  }
`

const AlignRow = styled.div`
  display: flex;
  align-items: center;
  justify-content: space-between;
  height: ${p => p.$h}px;
  margin-top: ${p => p.$mt || 0}px;
  white-space: nowrap;
`

const AlignIcons = styled.div`
  display: grid;
  grid-template-columns: repeat(6, 68px);
  justify-content: center;
  justify-items: center;
  align-items: center;
  margin: 0 -10px 0 -11px;
  height: ${p => p.$h}px;
  > button { display: block; }
`

const Rule = styled.div`
  height: 2px;
  margin: 0 10px 4px 0;
  background: #303030;
`

/* ---------- timeline ---------- */

const TimelinePanel = styled(Panel)`
  margin: 0 2px;
  border: 2px solid ${colorBlue};
  border-bottom: 0;
`

const TimelineTabs = styled(Tabs)`
  height: 50px;
  gap: 76px;
  font-size: 20px;
`

const TimelineMain = styled.div`
  display: flex;
  min-height: 458px;
`

const LayerSide = styled.div`
  width: 1398px;
  flex: none;
  border-right: 2px solid #000;
`

const LayerTools = styled.div`
  display: flex;
  align-items: center;
  height: 74px;
  padding: 0 30px 0 12px;
`

const Timecode = styled.div`
  width: 220px;
  padding: 4px 16px 0 0;
  text-align: center;
  font-family: ${fontSystem};
  color: #1b69a8;
  white-space: nowrap;
  > strong {
    display: block;
    font-family: ${fontTimecode};
    font-size: 30px;
    line-height: 30px;
    font-weight: bold;
    color: #38a1f2;
  }
`

const LayerSearch = styled.div`
  display: flex;
  width: 762px;
`

const LayerButtons = styled.div`
  flex: 1;
  display: flex;
  align-items: center;
  justify-content: flex-end;
  gap: 34px;
`

const LayerToggles = styled.div`
  display: flex;
  align-items: center;
  gap: 22px;
`

const LayerTable = styled.table`
  table-layout: fixed;
  width: 1396px;
  border-spacing: 0;
  th, td {
    padding: 0;
    text-align: left;
    font-weight: normal;
    white-space: nowrap;
  }
  th {
    height: 40px;
    background: #333;
    border-top: 2px solid #000;
    border-bottom: 2px solid #000;
  }
  td {
    height: 38px;
    border-bottom: 2px solid #262626;
  }
`

const LayerRow = styled.tr`
  --cell: ${p => (p.$on ? '#303030' : '#212121')};
  background: ${p => (p.$on ? '#454545' : '#2f2f2f')};
`

const Cells = styled.div`
  display: flex;
  gap: 4px;
  padding-left: ${p => p.$pad}px;
`

const Cell = styled.span`
  display: grid;
  place-items: center;
  width: 26px;
  height: 26px;
  background: ${p => (p.$empty ? 'transparent' : 'var(--cell)')};
`

const Twirl = styled.div`
  display: flex;
  align-items: center;
  gap: 14px;
  padding-left: 12px;
`

const LayerSwatch = styled(Swatch)`
  width: 28px;
  height: 28px;
`

const LayerNumber = styled.td`
  && { padding-left: 12px; }
  font-family: ${fontSystem};
`

const AiBadge = styled.span`
  display: flex;
  flex-direction: column;
  align-items: center;
  width: 24px;
  height: 28px;
  border: 1px solid #e08a1e;
  border-radius: 3px 7px 3px 3px;
  background: #2c0000;
  color: #ff9a00;
  font: bold 14px/16px "Liberation Sans", sans-serif;
  > small {
    font-size: 8px;
    line-height: 8px;
    color: #fff;
  }
`

const LayerName = styled.div`
  display: flex;
  align-items: center;
  gap: 8px;
  padding-left: 9px;
  font-family: ${fontSystem};
  font-size: 21px;
  > b {
    flex: 1;
    height: 36px;
    padding: 6px 0 0 6px;
    font-weight: normal;
    ${p => p.$on && css`background: #a0a0a0; color: #1e1e1e;`}
  }
`

const Parent = styled.div`
  display: flex;
  align-items: center;
  gap: 12px;
  padding-left: 9px;
`

const SwitchHead = styled.div`
  display: flex;
  align-items: center;
  gap: 4px;
  height: 22px;
  padding-left: 8px;
  border-left: 2px solid #080808;
  > span {
    display: grid;
    place-items: center;
    width: 26px;
  }
  i {
    font-family: "Liberation Serif", serif;
    font-size: 28px;
    color: ${colorIcon};
  }
`

const TimeSide = styled.div`
  position: relative;
  flex: 1;
  display: flex;
  flex-direction: column;
  padding-top: 14px;
  overflow: hidden;
`

const RangeBar = styled.div`
  display: flex;
  align-items: center;
  gap: 3px;
  height: ${p => p.$h}px;
  background: #0c0c0c;
  border-top: 2px solid #000;
  border-bottom: 2px solid #000;
  > button {
    width: 12px;
    height: 100%;
    background: ${colorBlue};
    border-radius: 8px 0 0 8px;
  }
  > button:last-child {
    width: 10px;
    border-radius: 0 8px 8px 0;
  }
  > div {
    flex: 1;
    height: 100%;
    background: ${p => p.$fill};
  }
`

const Ruler = styled.div`
  position: relative;
  height: 38px;
  margin: 0 13px 0 15px;
`

const Tick = styled.div`
  position: absolute;
  top: 0;
  width: 80px;
  height: 38px;
  margin-left: -40px;
  line-height: 24px;
  text-align: center;
  font-weight: 300;
  background: linear-gradient(#8c8c8c, #8c8c8c) 50% 100% / 2px 10px no-repeat;
`

const Cache = styled.div`
  height: 8px;
  padding: 0 13px 0 376px;
  border-bottom: 2px solid #000;
  > div {
    height: 6px;
    background: #12bd20;
  }
`

const Track = styled.div`
  height: 38px;
  padding: 2px 14px 2px 15px;
  background: ${p => (p.$on ? '#454545' : '#2f2f2f')};
  border-bottom: 2px solid #262626;
  > div {
    height: 32px;
    ${p => (p.$on
      ? css`
        background: linear-gradient(#a8a7c2, #8684ad);
        border-top: 2px solid #c5c4d8;
      `
      : css`
        background: #747282;
        border-bottom: 2px solid #5e5c6c;
      `)}
  }
`

const TrackSpace = styled.div`
  flex: 1;
  margin: 0 14px 2px 15px;
  background: #343434;
`

const Playhead = styled.div`
  position: absolute;
  left: 4px;
  top: 44px;
  bottom: 0;
  width: 22px;
  &::after {
    content: '';
    position: absolute;
    left: 10px;
    top: 26px;
    bottom: 0;
    width: 2px;
    background: ${colorBlue};
  }
`

const MarkerSide = styled.div`
  display: flex;
  flex-direction: column;
  align-items: center;
  gap: 12px;
  width: 34px;
  padding-top: 78px;
  background: #232323;
`

const TimelineFoot = styled.footer`
  display: flex;
  align-items: center;
  height: 34px;
  border-top: 2px solid #000;
  background: linear-gradient(90deg, transparent 1614px, #222 1614px);
`

const FootToggles = styled.div`
  display: flex;
  align-items: center;
  gap: 12px;
  width: 1408px;
  padding-left: 11px;
`

const ZoomSlider = styled.input`
  appearance: none;
  width: 98px;
  height: 20px;
  margin: 0 24px 0 22px;
  background: linear-gradient(#404040, #404040) center / 100% 4px no-repeat;
  &::-webkit-slider-thumb {
    appearance: none;
    width: 20px;
    height: 20px;
    border: 4px solid #9a9a9a;
    border-radius: 50%;
    background: ${colorPanel};
  }
`

/* ---------- data ---------- */

const title =
  'Adobe After Effects 2020 - /Users/okudayoshikio/Desktop/レーヴ首里石嶺_webバナー広告/banner_digital1/バナーアニメーション/banner1 animation.aep *'

const toolGroups = [
  [['手のひら', HandIcon], ['ズーム', ZoomIcon]],
  [['カメラ周回', OrbitIcon], ['カメラ移動', PanIcon], ['カメラ奥行き', DollyIcon]],
  [['回転', RotateIcon], ['アンカーポイント', AnchorToolIcon]],
  [['長方形', RectIcon], ['ペン', PenIcon], ['横書き文字', TypeIcon]],
  [['ブラシ', BrushIcon], ['コピースタンプ', StampIcon], ['消しゴム', EraserIcon]],
  [['ロトブラシ', RotoIcon]],
  [['パペットピン', PinIcon]]
]

const projectItems = [
  { name: 'test', kind: 'コンポジション', color: colorSand, on: true },
  { name: 'banner_ digital1 レイヤー', kind: 'フォルダー', color: '#e3d84b', folder: true },
  { name: 'banner_ digital1', kind: 'コンポジション', color: colorSand }
]

const layers = [
  { name: '堂々完成/ba...ital1.ai', on: true },
  { name: '首里石嶺にて/...al1.ai', on: true, matte: true },
  { name: 'ロゴ/bann...igital1.ai', on: true, matte: true },
  { name: 'BG/bann...igital1.ai', matte: true },
  { name: '実際の物件をご...l1.ai', matte: true },
  { name: '長方形/ban...ital1.ai', matte: true }
]

const handles = [
  [74, 20], [186, 20], [296, 20],
  [74, 50], [296, 50],
  [74, 80], [186, 80], [296, 80],
  [-4, 54], [178, 54], [360, 54],
  [-4, 124], [360, 124],
  [-4, 196], [178, 196], [360, 196],
  [468, 10, 29], [468, 41, 15], [524, 10, 46], [582, 10, 46]
]

const marks = [[192, 57], [184, 132]]

const seconds = ['0:00s', '01s', '02s', '03s', '04s', '05s', '06s', '07s', '08s', '09s', '10s']

/* ---------- sections ---------- */

const ShapeButtons = ({ shapes, h }) => (
  <AlignIcons $h={h}>
    {shapes.map(([name, rects]) => (
      <button key={name} aria-label={name}>
        <Icon w={36} h={36}>
          {rects.map(([x, y, w, h], i) => (
            <rect key={i} x={x} y={y} width={w} height={h} />
          ))}
        </Icon>
      </button>
    ))}
  </AlignIcons>
)

const TopBar = () => (
  <Toolbar>
    <Grip />
    <Tools $first>
      <Tool aria-label='ホーム'><HomeIcon /></Tool>
    </Tools>
    {toolGroups.map((group, i) => (
      <Tools key={i} $wide={i === toolGroups.length - 1}>
        {i === 0 && <ToolActive aria-label='選択'><ArrowIcon /></ToolActive>}
        {group.map(([name, Glyph]) => (
          <Tool key={name} aria-label={name}><Glyph /></Tool>
        ))}
      </Tools>
    ))}
    <AxisTools>
      <AxisTool $on aria-label='ローカル軸'><AxisIcon color='#1e3f63' /></AxisTool>
      <AxisTool aria-label='ワールド軸'><AxisIcon color='#4a4a4a' hub /></AxisTool>
      <AxisTool aria-label='ビュー軸'><ViewAxisIcon /></AxisTool>
    </AxisTools>
    <Snapping>
      <label>
        <input type='checkbox' />
        スナップ
      </label>
      <SnapEdgeIcon />
      <ToolActive aria-label='スナップ範囲'><SnapBoxIcon /></ToolActive>
    </Snapping>
    <Workspaces>
      <WorkspaceActive>
        <WorkspaceTab $on>デフォルト</WorkspaceTab>
        <MenuIcon color={colorBlue} />
      </WorkspaceActive>
      <WorkspaceTab>学習</WorkspaceTab>
      <WorkspaceTab>標準</WorkspaceTab>
      <WorkspaceTab>小さい画面</WorkspaceTab>
      <Push aria-label='その他'><MoreIcon /></Push>
    </Workspaces>
    <HelpArea>
      <button aria-label='設定を同期'><GearIcon /></button>
      <SearchBox>
        <SearchIcon />
        <input aria-label='ヘルプを検索' placeholder='ヘルプを検索' />
      </SearchBox>
    </HelpArea>
  </Toolbar>
)

const ProjectPanel = () => (
  <Panel>
    <Tabs $pad={24}>
      <Tab $on>プロジェクト<MenuIcon /></Tab>
      <EffectTab>
        <Swatch $color={colorLavender} />
        エフェクトコントロール ロゴ
      </EffectTab>
      <PanelMore aria-label='その他のパネル'><MoreIcon /></PanelMore>
    </Tabs>
    <Preview>
      <Thumb />
      <Info>
        test <b>▼</b><br />
        300 x 250 (1.00)<br />
        <small>△</small> 0;00;10;00, 29.97 fps
      </Info>
    </Preview>
    <SearchRow>
      <SearchBox $h={38}>
        <SearchIcon caret />
        <input aria-label='プロジェクトを検索' />
      </SearchBox>
    </SearchRow>
    <ProjectTable>
      <colgroup>
        {[31, 431, 42, 98, 34].map(w => (
          <col key={w} style={{ width: w }} />
        ))}
      </colgroup>
      <thead>
        <tr>
          <th aria-label='展開' />
          <th>
            <HeadCell $between>
              名前
              <Icon w={24} h={10} color={colorBlue}><path d='M0 0H24L12 10Z' /></Icon>
            </HeadCell>
          </th>
          <th><HeadCell $pad={8}><TagIcon /></HeadCell></th>
          <th colSpan='2'><HeadCell>種類</HeadCell></th>
        </tr>
      </thead>
      <tbody>
        {projectItems.map(item => (
          <ProjectRow key={item.name} $on={item.on}>
            <td>{item.folder && <Cells $pad={8}><ChevronRight /></Cells>}</td>
            <td>
              <ItemName $on={item.on}>
                {item.folder ? <FolderIcon /> : <CompIcon />}
                <span>{item.name}</span>
              </ItemName>
            </td>
            <td><LabelSwatch $color={item.color} /></td>
            <td><Cells $pad={14}>{item.kind}</Cells></td>
            <td>{item.on && <Center><FlowIcon /></Center>}</td>
          </ProjectRow>
        ))}
      </tbody>
    </ProjectTable>
    <Filler />
    <PanelFoot>
      <InterpretIcon />
      <FolderIcon />
      <CompIcon size={34} />
      <RocketIcon />
      <FieldButton>8 bpc</FieldButton>
      <TrashIcon />
      <FootScroll />
    </PanelFoot>
  </Panel>
)

const CompositionPanel = () => (
  <Panel>
    <Tabs $pad={22}>
      <Tab $on>
        <CloseIcon />
        <Swatch $color={colorSand} />
        <UnlockIcon />
        <TabTitle>コンポジション <Blue>test</Blue></TabTitle>
        <MenuIcon />
      </Tab>
      <Tab $px={74}>レイヤー (なし)</Tab>
    </Tabs>
    <Crumbs><button>test</button></Crumbs>
    <Viewer>
      <Board>
        <OuterBounds $t={4} />
        <InnerBounds $t={2} $open />
        {marks.map(([x, y]) => (
          <Mark key={x} style={{ left: x - 20, top: y - 20 }}><AnchorMark /></Mark>
        ))}
        {handles.map(([x, y, h]) => (
          <Handle key={`${x}-${y}`} $h={h} style={{ left: x, top: y }} />
        ))}
        <Mark style={{ left: 513, top: 13 }}><AnchorMark /></Mark>
      </Board>
    </Viewer>
    <ViewerBar>
      <BarIcon aria-label='常にプレビュー'><StackPlayIcon /></BarIcon>
      <BarIcon aria-label='モニター'><MonitorIcon /></BarIcon>
      <BarGroup>
        <BarIcon $w={36} aria-label='マスク'><MaskIcon /></BarIcon>
        <Select label='拡大率' value='200 %' $w={138} />
        <BarIcon $w={40} aria-label='グリッド'><TargetIcon /></BarIcon>
        <BarIcon $w={40} $on aria-label='マスク表示'><MaskPathIcon /></BarIcon>
        <FieldButton $px={18}>0;00;00;00</FieldButton>
        <BarIcon $w={38} aria-label='スナップショット'><CameraIcon /></BarIcon>
        <BarIcon $w={42} aria-label='スナップショットを表示'><GhostCameraIcon /></BarIcon>
        <BarIcon $w={40} aria-label='チャンネル'><RgbIcon /></BarIcon>
        <Select label='解像度' value='(フル画質)' $w={176} />
        <BarIcon $w={38} aria-label='目標範囲'><RoiIcon /></BarIcon>
        <BarIcon $w={40} $on aria-label='透明グリッド'><GridIcon /></BarIcon>
        <Select label='3D ビュー' value='アクティブカ...' $w={214} />
        <Select label='ビューのレイアウト' value='1 画面' $w={142} />
        <BarIcon $w={38} aria-label='ピクセル縦横比'><AspectIcon /></BarIcon>
        <BarIcon $w={44} $on aria-label='高速プレビュー'><FastIcon /></BarIcon>
        <BarIcon $w={38} aria-label='タイムライン'><TimelineIcon /></BarIcon>
        <BarIcon $w={40} aria-label='フローチャート'><FlowIcon /></BarIcon>
      </BarGroup>
      <BarIcon aria-label='露出をリセット'><ShutterIcon /></BarIcon>
      <Exposure>+0.0</Exposure>
    </ViewerBar>
  </Panel>
)

const SidePanels = () => (
  <Panel as='aside'>
    <SideList>
      {['情報', 'オーディオ', 'プレビュー', 'エフェクト＆プリセット'].map(name => (
        <SideItem key={name}>{name}</SideItem>
      ))}
      <AlignPanel>
        <h2>整列<MenuIcon /></h2>
        <AlignRow $h={36} $mt={18}>
          レイヤーを整列 :
          <Select label='レイヤーを整列' value='選択範囲' $w={220} />
        </AlignRow>
        <ShapeButtons shapes={alignShapes} h={60} />
        <Rule />
        <AlignRow $h={26}>レイヤーを配置 :</AlignRow>
        <ShapeButtons shapes={distributeShapes} h={54} />
      </AlignPanel>
      {['CC ライブラリ', '文字', '段落', 'トラッカー', 'ブラシ', 'ペイント'].map(name => (
        <SideItem key={name}>{name}</SideItem>
      ))}
    </SideList>
  </Panel>
)

const Layers = () => (
  <LayerTable>
    <colgroup>
      {[135, 64, 66, 259, 275, 151, 38, 143, 234, 31].map(w => (
        <col key={w} style={{ width: w }} />
      ))}
    </colgroup>
    <thead>
      <tr>
        <th><HeadCell $bare $gap={9}><EyeIcon /><SpeakerIcon /><DotIcon /><LockIcon /></HeadCell></th>
        <th><HeadCell $pad={24}><TagIcon /></HeadCell></th>
        <th><HeadCell>#</HeadCell></th>
        <th><HeadCell>ソース名</HeadCell></th>
        <th>
          <SwitchHead>
            <span><ShyIcon /></span>
            <span><SunIcon /></span>
            <span><JagIcon /></span>
            <span><i>fx</i></span>
            <span><FilmIcon w={26} h={24} /></span>
            <span><BlurIcon w={26} h={26} /></span>
            <span><HalfIcon /></span>
            <span><CubeIcon /></span>
          </SwitchHead>
        </th>
        <th><HeadCell>モード</HeadCell></th>
        <th><HeadCell $bare>T</HeadCell></th>
        <th><HeadCell $bare $pad={8}>ﾄﾗｯｸﾏｯﾄ</HeadCell></th>
        <th><HeadCell>親とリンク</HeadCell></th>
        <th><HeadCell /></th>
      </tr>
    </thead>
    <tbody>
      {layers.map((layer, i) => (
        <LayerRow key={layer.name} $on={layer.on}>
          <td>
            <Cells $pad={8}>
              <Cell><EyeIcon /></Cell>
              <Cell $empty />
              <Cell />
              <Cell />
            </Cells>
          </td>
          <td><Twirl><ChevronRight /><LayerSwatch $color={colorLavender} /></Twirl></td>
          <LayerNumber>{i + 1}</LayerNumber>
          <td>
            <LayerName $on={layer.on}>
              <AiBadge>Ai<small>AI</small></AiBadge>
              <b>{layer.name}</b>
            </LayerName>
          </td>
          <td>
            <Cells $pad={10}>
              <Cell><ShyIcon /></Cell>
              <Cell />
              <Cell><SlashIcon /></Cell>
              <Cell $empty />
              <Cell $empty />
              <Cell />
              <Cell />
              <Cell />
            </Cells>
          </td>
          <td><Cells $pad={7}><Select label='モード' value='通常' $w={138} $h={32} $flat /></Cells></td>
          <td><Cells $pad={4}><Cell /></Cells></td>
          <td>
            {layer.matte && (
              <Cells $pad={4}><Select label='トラックマット' value='なし' $w={130} $h={32} $flat /></Cells>
            )}
          </td>
          <td>
            <Parent>
              <WhipIcon />
              <Select label='親とリンク' value='なし' $w={178} $h={32} $flat />
            </Parent>
          </td>
          <td />
        </LayerRow>
      ))}
    </tbody>
  </LayerTable>
)

const Timeline = () => (
  <TimelinePanel>
    <TimelineTabs $pad={50}>
      <Tab>
        <Swatch $color={colorSand} />
        banner_ digital1
      </Tab>
      <Tab $on>
        <CloseIcon />
        <Swatch $color={colorSand} />
        test
        <MenuIcon />
      </Tab>
    </TimelineTabs>
    <TimelineMain>
      <LayerSide>
        <LayerTools>
          <Timecode>
            <strong>0;00;00;00</strong>
            00000 (29.97 fps)
          </Timecode>
          <LayerSearch>
            <SearchBox $h={38}>
              <SearchIcon caret />
              <input aria-label='レイヤーを検索' />
            </SearchBox>
          </LayerSearch>
          <LayerButtons>
            <button aria-label='ミニフローチャート'><MiniFlowIcon /></button>
            <button aria-label='ドラフト 3D'><DraftIcon /></button>
            <LayerToggles>
              <button aria-label='シャイ'><ShyHideIcon /></button>
              <button aria-label='フレームブレンド'><FilmIcon /></button>
              <button aria-label='モーションブラー'><BlurIcon /></button>
            </LayerToggles>
            <button aria-label='グラフエディター'><GraphIcon /></button>
          </LayerButtons>
        </LayerTools>
        <Layers />
      </LayerSide>
      <TimeSide>
        <RangeBar $h={20} $fill='#686868'>
          <button aria-label='表示開始' />
          <div />
          <button aria-label='表示終了' />
        </RangeBar>
        <Ruler>
          {seconds.map((s, i) => (
            <Tick key={s} style={{ left: `${i * 10}%` }}>{s}</Tick>
          ))}
        </Ruler>
        <RangeBar $h={34} $fill='#606060'>
          <button aria-label='ワークエリア開始' />
          <div />
          <button aria-label='ワークエリア終了' />
        </RangeBar>
        <Cache><div /></Cache>
        {layers.map(layer => (
          <Track key={layer.name} $on={layer.on}><div /></Track>
        ))}
        <TrackSpace />
        <Playhead>
          <Icon w={22} h={28} color={colorBlue}>
            <path d='M2 0H20Q22 0 22 2V12L11 28L0 12V2Q0 0 2 0Z' />
            <path d='M10 14H12V28H10Z' fill='#8c8c8c' />
          </Icon>
        </Playhead>
      </TimeSide>
      <MarkerSide>
        <MarkerIcon />
        <CompButtonIcon />
      </MarkerSide>
    </TimelineMain>
    <TimelineFoot>
      <FootToggles>
        <ToggleLayersIcon />
        <ToggleModesIcon />
        <BracesIcon />
      </FootToggles>
      <HillsIcon w={20} h={8} />
      <ZoomSlider type='range' min='0' max='100' defaultValue='0' aria-label='ズーム' />
      <HillsIcon w={32} h={14} />
    </TimelineFoot>
  </TimelinePanel>
)

export default class App extends Component {
  render () {
    return (
      <Window>
        <GlobalStyle />
        <TitleBar>
          <Lights>
            <Light $color='#fc5d57' $edited aria-label='閉じる' />
            <Light $color='#fdbc2e' aria-label='しまう' />
            <Light $color='#29c83f' aria-label='拡大' />
          </Lights>
          <h1>{title}</h1>
        </TitleBar>
        <TopBar />
        <Workarea>
          <ProjectPanel />
          <CompositionPanel />
          <SidePanels />
        </Workarea>
        <Timeline />
      </Window>
    )
  }
}
